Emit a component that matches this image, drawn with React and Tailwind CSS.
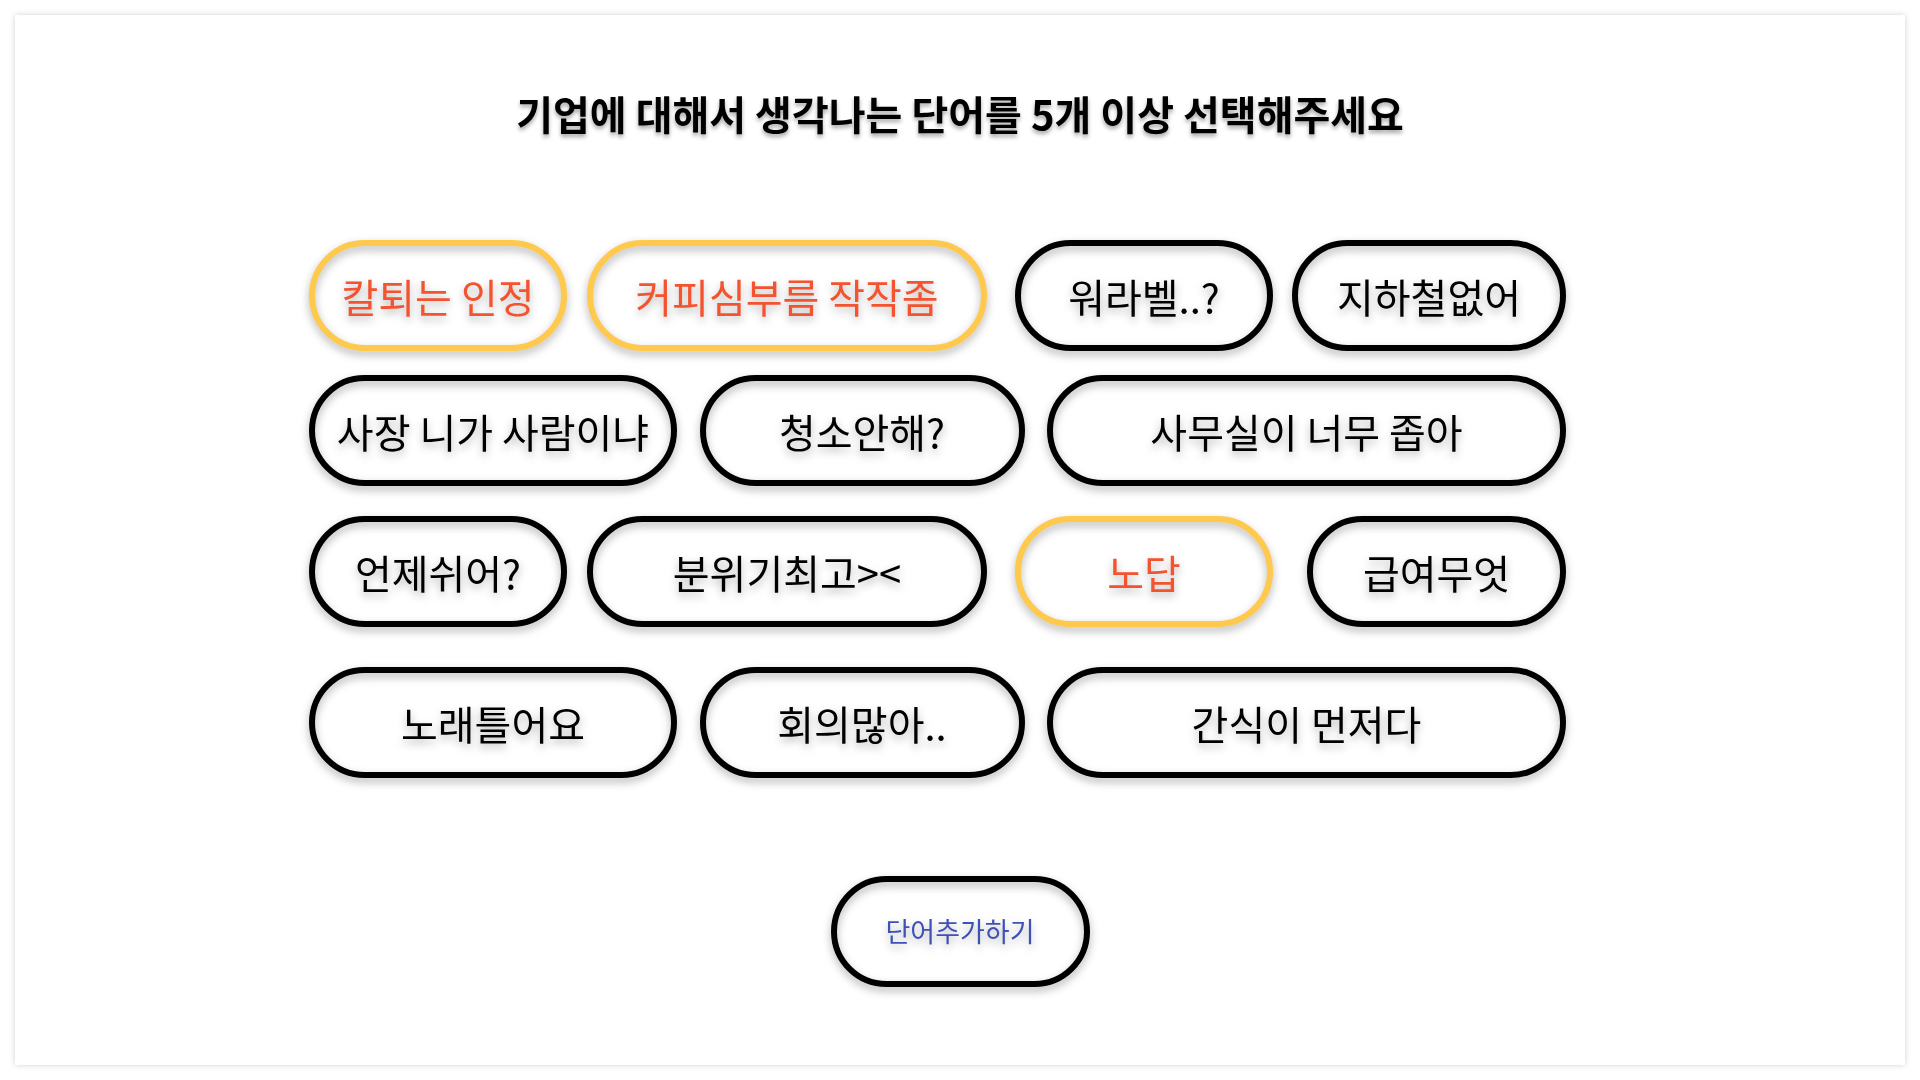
const ROW1 = [
  { text: '칼퇴는 인정', w: 'w-[258px]', sel: true },
  { text: '커피심부름 작작좀', w: 'w-[400px] ml-[20px]', sel: true },
  { text: '워라벨..?', w: 'w-[258px] ml-[28px]' },
  { text: '지하철없어', w: 'w-[274px] ml-auto' },
]
const ROW2 = [
  { text: '사장 니가 사람이냐', w: 'w-[368px]' },
  { text: '청소안해?', w: 'w-[325px]' },
  { text: '사무실이 너무 좁아', w: 'w-[519px]' },
]
const ROW3 = [
  { text: '언제쉬어?', w: 'w-[258px]' },
  { text: '분위기최고><', w: 'w-[400px] ml-[20px]' },
  { text: '노답', w: 'w-[258px] ml-[28px]', sel: true },
  { text: '급여무엇', w: 'w-[259px] ml-auto' },
]
const ROW4 = [
  { text: '노래틀어요', w: 'w-[368px]' },
  { text: '회의많아..', w: 'w-[325px]' },
  { text: '간식이 먼저다', w: 'w-[519px]' },
]

function Word({ text, w, sel }) {
  return (
    <button
      className={`${w} h-[111px] shrink-0 rounded-full border-[6px] bg-transparent text-[40px] leading-none drop-shadow-[0_4px_4px_rgba(0,0,0,0.3)] ${
        sel ? 'border-[#ffc94d] text-[#f4532f]' : 'border-black text-black'
      }`}
    >
      {text}
    </button>
  )
}

export default function App() {
  return (
    <div className="min-h-screen bg-white p-[15px] font-['Noto_Sans_CJK_KR','Noto_Sans',sans-serif]">
      <div className="flex h-[1050px] flex-col items-center bg-white shadow-[0_0_6px_rgba(0,0,0,0.18)]">
        <h1 className="mt-[74px] text-[40px] font-bold leading-[48px] text-black drop-shadow-[0_3px_2px_rgba(0,0,0,0.35)]">
          기업에 대해서 생각나는 단어를 5개 이상 선택해주세요
        </h1>

        <div className="mt-[103px] ml-[-45px] flex w-[1257px] flex-col">
          <div className="flex">
            {ROW1.map((b) => <Word key={b.text} {...b} />)}
          </div>
          <div className="mt-[24px] flex justify-between">
            {ROW2.map((b) => <Word key={b.text} {...b} />)}
          </div>
          <div className="mt-[30px] flex">
            {ROW3.map((b) => <Word key={b.text} {...b} />)}
          </div>
          <div className="mt-[40px] flex justify-between">
            {ROW4.map((b) => <Word key={b.text} {...b} />)}
          </div>
        </div>

        <button className="mt-[98px] h-[111px] w-[259px] rounded-full border-[6px] border-black bg-transparent text-[27px] text-[#3f51b5] drop-shadow-[0_4px_4px_rgba(0,0,0,0.3)]">
          단어추가하기
        </button>
      </div>
    </div>
  )
}
